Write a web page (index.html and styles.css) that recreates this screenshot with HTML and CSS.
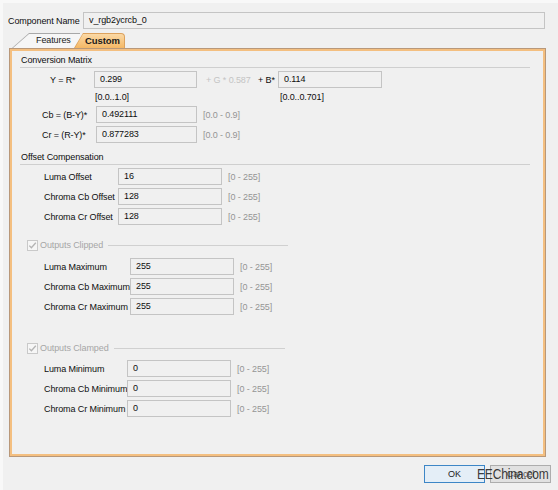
FILE: index.html
```html
<!DOCTYPE html>
<html>
<head>
<meta charset="utf-8">
<link rel="stylesheet" href="styles.css">
</head>
<body>
<div class="window">
  <div class="name-row">
    <span class="name-label">Component Name</span>
    <div class="field name-field">v_rgb2ycrcb_0</div>
  </div>
  <div class="tabs">
    <div class="tab tab-features"><span>Features</span></div>
    <div class="tab tab-custom"><span>Custom</span></div>
  </div>
  <div class="panel">
    <div class="section-head head-conv">Conversion Matrix</div>
    <div class="row row-y">
      <span class="lbl lbl-y">Y = R*</span>
      <div class="field f-y1">0.299</div>
      <span class="ghost">+ G * 0.587</span>
      <span class="lbl lbl-b">+ B*</span>
      <div class="field f-y2">0.114</div>
    </div>
    <div class="row row-sub">
      <span class="sub1">[0.0..1.0]</span>
      <span class="sub2">[0.0..0.701]</span>
    </div>
    <div class="row row-cb">
      <span class="lbl lbl-c">Cb = (B-Y)*</span>
      <div class="field f-c">0.492111</div>
      <span class="range">[0.0 - 0.9]</span>
    </div>
    <div class="row row-cr">
      <span class="lbl lbl-c">Cr = (R-Y)*</span>
      <div class="field f-c">0.877283</div>
      <span class="range">[0.0 - 0.9]</span>
    </div>

    <div class="section-head head-off">Offset Compensation</div>
    <div class="row row-off first">
      <span class="lbl lbl-off">Luma Offset</span>
      <div class="field f-std">16</div>
      <span class="range">[0 - 255]</span>
    </div>
    <div class="row row-off">
      <span class="lbl lbl-off">Chroma Cb Offset</span>
      <div class="field f-std">128</div>
      <span class="range">[0 - 255]</span>
    </div>
    <div class="row row-off">
      <span class="lbl lbl-off">Chroma Cr Offset</span>
      <div class="field f-std">128</div>
      <span class="range">[0 - 255]</span>
    </div>

    <div class="check-head head-clip">
      <svg class="cb" width="11" height="11" viewBox="0 0 11 11"><rect x="0.5" y="0.5" width="10" height="10" fill="#f6f6f6" stroke="#c9c9c9"/><path d="M2.3 5.6 L4.4 7.8 L8.8 2.8" fill="none" stroke="#b4b4b4" stroke-width="1.3"/></svg>
      <span class="check-text">Outputs Clipped</span>
      <span class="check-line"></span>
    </div>
    <div class="row row-max first">
      <span class="lbl lbl-max">Luma Maximum</span>
      <div class="field f-std">255</div>
      <span class="range">[0 - 255]</span>
    </div>
    <div class="row row-max">
      <span class="lbl lbl-max">Chroma Cb Maximum</span>
      <div class="field f-std">255</div>
      <span class="range">[0 - 255]</span>
    </div>
    <div class="row row-max">
      <span class="lbl lbl-max">Chroma Cr Maximum</span>
      <div class="field f-std">255</div>
      <span class="range">[0 - 255]</span>
    </div>

    <div class="check-head head-clamp">
      <svg class="cb" width="11" height="11" viewBox="0 0 11 11"><rect x="0.5" y="0.5" width="10" height="10" fill="#f6f6f6" stroke="#c9c9c9"/><path d="M2.3 5.6 L4.4 7.8 L8.8 2.8" fill="none" stroke="#b4b4b4" stroke-width="1.3"/></svg>
      <span class="check-text">Outputs Clamped</span>
      <span class="check-line"></span>
    </div>
    <div class="row row-min first">
      <span class="lbl lbl-min">Luma Minimum</span>
      <div class="field f-std">0</div>
      <span class="range">[0 - 255]</span>
    </div>
    <div class="row row-min">
      <span class="lbl lbl-min">Chroma Cb Minimum</span>
      <div class="field f-std">0</div>
      <span class="range">[0 - 255]</span>
    </div>
    <div class="row row-min">
      <span class="lbl lbl-min">Chroma Cr Minimum</span>
      <div class="field f-std">0</div>
      <span class="range">[0 - 255]</span>
    </div>
  </div>
  <div class="buttons">
    <div class="btn btn-ok">OK</div>
    <div class="btn btn-cancel">Cancel</div>
    <span class="watermark">EEChina.com</span>
  </div>
</div>
</body>
</html>
```
FILE: styles.css
```css
* { box-sizing: border-box; }
html, body { margin: 0; padding: 0; }
body {
  width: 558px;
  height: 490px;
  overflow: hidden;
  background: #f0f0f0;
  font-family: "Liberation Sans", Arial, sans-serif;
  font-size: 9px;
  letter-spacing: -0.1px;
  color: #0e0e0e;
}
.window {
  position: relative;
  width: 558px;
  height: 490px;
  border-top: 3px solid #f8f8f8;
  border-left: 3px solid #f8f8f8;
}
.name-row {
  display: flex;
  align-items: center;
  height: 17px;
  margin-top: 9px;
  padding-left: 5px;
  white-space: nowrap;
}
.name-label { width: 75px; flex: none; }
.field {
  flex: none;
  height: 17px;
  border: 1px solid #c4c4c4;
  background: #f0f0f0;
  padding-left: 5px;
  line-height: 15px;
  color: #0e0e0e;
  white-space: nowrap;
}
.name-field { width: 462px; }

.tabs {
  display: flex;
  height: 15px;
  margin-top: 4px;
  margin-left: 9px;
  white-space: nowrap;
}
.tab {
  position: relative;
  z-index: 0;
  line-height: 15px;
  height: 15px;
  flex: none;
}
.tab::before, .tab::after {
  content: "";
  position: absolute;
  z-index: -1;
}
.tab-features {
  width: 68px;
  padding-left: 24px;
  color: #222;
}
.tab-features::before {
  inset: 0;
  background: #a8a8a8;
  clip-path: polygon(0 100%, 17px 0, 100% 0, 100% 100%);
}
.tab-features::after {
  inset: 1px 0 0 1px;
  background: #f6f6f6;
  clip-path: polygon(0 100%, 16px 0, 100% 0, 100% 100%);
}
.tab-custom {
  width: 51px;
  margin-left: -6px;
  padding-left: 11px;
  font-weight: bold;
  font-size: 9.5px;
  color: #1a1a1a;
  z-index: 1;
}
.tab-custom::before {
  inset: 0;
  background: #dca25e;
  border-top-right-radius: 4px;
  clip-path: polygon(0 100%, 9px 0, 100% 0, 100% 100%);
}
.tab-custom::after {
  inset: 1px 1px 0 1px;
  background: linear-gradient(#fbd9a6, #f5b865);
  border-top-right-radius: 3px;
  clip-path: polygon(0 100%, 8px 0, 100% 0, 100% 100%);
}

.panel {
  width: 537px;
  height: 409px;
  margin-left: 6px;
  border: 1px solid #b8987a;
  box-shadow: inset 0 0 0 2px #f4bf80;
  background: #f0f0f0;
}

.section-head {
  margin-left: 10px;
  margin-right: 15px;
  padding-left: 1px;
  line-height: 13px;
  border-bottom: 1px solid #cfcfcf;
}
.head-conv { height: 19px; padding-top: 5px; }
.head-off { height: 22px; padding-top: 8px; }

.row {
  display: flex;
  align-items: center;
  height: 17px;
  white-space: nowrap;
}
.lbl { flex: none; }
.range { color: #959595; margin-left: 6px; }

.row-y { margin-top: 3px; margin-left: 40px; }
.lbl-y { width: 44px; }
.f-y1 { width: 103px; }
.ghost { flex: none; width: 61px; padding-left: 9px; color: #c4c4c4; }
.lbl-b { width: 20px; }
.f-y2 { width: 104px; }

.row-sub { height: 14px; margin-top: 2px; margin-left: 85px; }
.sub1 { width: 185px; flex: none; }

.row-cb { margin-top: 2px; margin-left: 32px; }
.row-cr { margin-top: 3px; margin-left: 32px; }
.lbl-c { width: 54px; }
.f-c { width: 101px; }

.row-off { margin-left: 34px; margin-top: 3px; }
.row-off.first { margin-top: 3px; }
.lbl-off { width: 74px; }
.f-std { width: 104px; }

.check-head {
  display: flex;
  align-items: center;
  height: 12px;
  margin-left: 17px;
  color: #a6a6a6;
  white-space: nowrap;
}
.head-clip { margin-top: 14px; width: 261px; }
.head-clamp { margin-top: 27px; width: 258px; }
.cb { flex: none; }
.check-text { margin-left: 2px; }
.check-line {
  flex: 1;
  height: 1px;
  margin-left: 5px;
  background: #d0d0d0;
}

.row-max { margin-left: 34px; margin-top: 3px; }
.row-max.first { margin-top: 7px; }
.lbl-max { width: 86px; }

.row-min { margin-left: 34px; margin-top: 3px; }
.row-min.first { margin-top: 6px; }
.lbl-min { width: 83px; }

.buttons {
  display: flex;
  justify-content: flex-end;
  gap: 5px;
  margin-top: 8px;
  padding-right: 7px;
}
.btn {
  width: 61px;
  height: 18px;
  line-height: 16px;
  text-align: center;
  color: #222;
}
.btn-ok {
  border: 1px solid #3d86c6;
  background: #e4eef7;
}
.btn-cancel {
  border: 1px solid #adadad;
  background: #e1e1e1;
  color: #555;
}
.watermark {
  position: absolute;
  left: 474px;
  top: 462px;
  font-size: 15px;
  letter-spacing: -0.2px;
  color: rgba(35, 35, 35, 0.9);
  line-height: 18px;
  transform: scaleX(0.8);
  transform-origin: left center;
}
```
